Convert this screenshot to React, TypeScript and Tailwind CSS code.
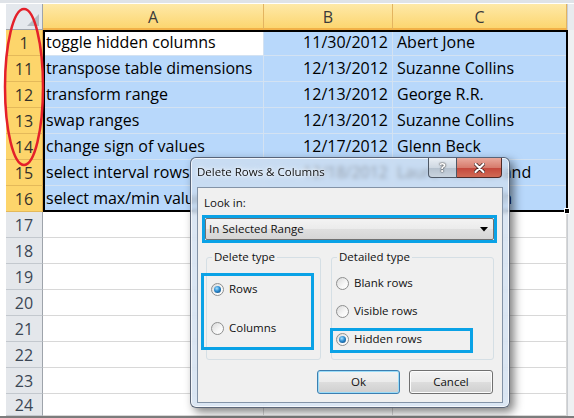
import React from 'react';

type Row = { n: number; a?: string; b?: string; c?: string };

const rows: Row[] = [
  { n: 1, a: 'toggle hidden columns', b: '11/30/2012', c: 'Abert Jone' },
  { n: 11, a: 'transpose table dimensions', b: '12/13/2012', c: 'Suzanne Collins' },
  { n: 12, a: 'transform range', b: '12/13/2012', c: 'George R.R.' },
  { n: 13, a: 'swap ranges', b: '12/13/2012', c: 'Suzanne Collins' },
  { n: 14, a: 'change sign of values', b: '12/17/2012', c: 'Glenn Beck' },
  { n: 15, a: 'select interval rows', b: '12/18/2012', c: 'Laura Hillenbrand' },
  { n: 16, a: 'select max/min values', b: '12/20/2012', c: 'Elizabeth Smith' },
  { n: 17 },
  { n: 18 },
  { n: 19 },
  { n: 20 },
  { n: 21 },
  { n: 22 },
  { n: 23 },
  { n: 24 },
];

const Radio = ({ checked }: { checked?: boolean }) => (
  <span className="flex h-[13px] w-[13px] shrink-0 items-center justify-center rounded-full border border-[#8e8f8f] bg-[linear-gradient(135deg,#d9d9d9,#f7f7f7_60%,#ffffff)]">
    {checked && (
      <span className="h-[7px] w-[7px] rounded-full bg-[radial-gradient(circle_at_40%_35%,#a8e2ff_0%,#2b8bd0_45%,#0c3d6c_100%)]" />
    )}
  </span>
);

const RadioItem = ({ label, checked }: { label: string; checked?: boolean }) => (
  <div className="flex h-[16px] items-center gap-[5px]">
    <Radio checked={checked} />
    <span>{label}</span>
  </div>
);

const GroupBox = ({
  title,
  className,
  children,
}: {
  title: string;
  className: string;
  children: React.ReactNode;
}) => (
  <div className={`relative rounded-[3px] border border-[#d5dfe5] ${className}`}>
    <span className="absolute left-[5px] top-[-9px] bg-[#f0f0f0] px-[2px] leading-[16px]">{title}</span>
    {children}
  </div>
);

const Dialog = () => (
  <div className="absolute left-[190px] top-[157px] flex h-[251px] w-[320px] flex-col rounded-[6px] border border-[rgba(40,50,70,0.7)] bg-[rgba(205,220,238,0.72)] shadow-[4px_4px_10px_rgba(0,0,0,0.5),inset_0_0_0_1px_rgba(255,255,255,0.7)] backdrop-blur-[2px] font-['Open_Sans','Noto_Sans',sans-serif] text-[11.5px] text-[#111]">
    {/* title bar */}
    <div className="flex h-[29px] items-start justify-between pl-[6px] pr-[7px]">
      <span className="mt-[6px] leading-[16px] [text-shadow:0_0_6px_#fff,0_0_3px_#fff]">Delete Rows &amp; Columns</span>
      <div className="flex">
        <div className="flex h-[20px] w-[29px] items-center justify-center rounded-bl-[4px] border border-t-0 border-[#4e5866] bg-[linear-gradient(#e9eef4,#cfd8e2_50%,#b4c0cd_51%,#c9d3de)] text-[13px] font-bold text-white [text-shadow:0_0_2px_#333,0_0_1px_#333]">
          ?
        </div>
        <div className="flex h-[20px] w-[45px] items-center justify-center rounded-br-[4px] border border-l-0 border-t-0 border-[#4e2a28] bg-[linear-gradient(#e9a99c,#d77c6d_50%,#c4463a_51%,#d06a55)]">
          <svg width="11" height="10" viewBox="0 0 11 10">
            <path d="M1.5 1 L9.5 9 M9.5 1 L1.5 9" stroke="#3a1a18" strokeWidth="3.6" strokeLinecap="round" />
            <path d="M1.5 1 L9.5 9 M9.5 1 L1.5 9" stroke="#ffffff" strokeWidth="2.2" strokeLinecap="round" />
          </svg>
        </div>
      </div>
    </div>

    {/* client area */}
    <div className="relative mx-[6px] mb-[4px] flex flex-1 flex-col border border-[#8393a7] bg-[#f0f0f0] pt-[7px]">
      <span className="ml-[6px] leading-[16px]">Look in:</span>
      <div className="ml-[4px] mt-[4px] h-[28px] w-[295px] border-[3px] border-[#0aa2e6]">
        <div className="flex h-full items-center justify-between rounded-[2px] border border-[#707070] bg-[linear-gradient(#f3f3f3,#ebebeb_50%,#dfdfdf_51%,#d5d5d5)] pl-[3px] pr-[5px]">
          <span>In Selected Range</span>
          <svg width="8" height="5" viewBox="0 0 8 5">
            <path d="M0 0 H8 L4 4.5 Z" fill="#000" />
          </svg>
        </div>
      </div>

      <div className="ml-[8px] mt-[14px] flex gap-[10px]">
        <GroupBox title="Delete type" className="h-[103px] w-[115px]">
          <div className="flex flex-col gap-[23px] pl-[4px] pt-[23px]">
            <RadioItem label="Rows" checked />
            <RadioItem label="Columns" />
          </div>
        </GroupBox>
        <GroupBox title="Detailed type" className="h-[103px] w-[163px]">
          <div className="flex flex-col gap-[12px] pl-[4px] pt-[17px]">
            <RadioItem label="Blank rows" />
            <RadioItem label="Visible rows" />
            <RadioItem label="Hidden rows" checked />
          </div>
        </GroupBox>
      </div>

      <div className="mt-[10px] flex justify-end gap-[9px] pr-[9px]">
        <button className="flex h-[24px] w-[83px] items-center justify-center rounded-[3px] border border-[#3c7fb1] bg-[linear-gradient(#f2f2f2,#ebebeb_50%,#dddddd_51%,#cfcfcf)] shadow-[inset_0_0_0_1px_#9bdcf8]">
          Ok
        </button>
        <button className="flex h-[24px] w-[84px] items-center justify-center rounded-[3px] border border-[#707070] bg-[linear-gradient(#f2f2f2,#ebebeb_50%,#dddddd_51%,#cfcfcf)] shadow-[inset_0_0_0_1px_#fcfcfc]">
          Cancel
        </button>
      </div>

      {/* annotation highlights */}
      <div className="absolute left-[3px] top-[85px] h-[77px] w-[113px] border-[3px] border-[#0aa2e6]" />
      <div className="absolute left-[132px] top-[140px] h-[25px] w-[143px] border-[3px] border-[#0aa2e6]" />
    </div>
  </div>
);

export default function App() {
  return (
    <div className="relative h-[418px] w-[574px] overflow-hidden bg-white font-['Open_Sans','Liberation_Sans',sans-serif] text-[16px] text-black">
      <div className="h-[4px] border-b border-white bg-[#dfe3e8]" />

      {/* column headers */}
      <div className="flex h-[26px]">
        <div className="w-[6px] bg-white" />
        <div className="relative w-[37px] border-b border-r border-[#9ea4ab] bg-[#e4e8ed]">
          <div className="absolute bottom-[3px] right-[3px] h-0 w-0 border-b-[12px] border-l-[12px] border-b-[#b6bcc3] border-l-transparent" />
        </div>
        {[
          ['A', 'w-[221px]'],
          ['B', 'w-[129px]'],
          ['C', 'w-[174px]'],
        ].map(([l, w]) => (
          <div
            key={l}
            className={`${w} flex items-center justify-center border-b-2 border-r border-b-[#f2b148] border-r-[#e3b460] bg-[linear-gradient(#fee9a8,#fcd670)] pt-[2px] text-[#3a3a3a]`}
          >
            {l}
          </div>
        ))}
        <div className="w-[7px] border-l border-[#c9cdd2] bg-[#e8ebee]" />
      </div>

      {/* rows */}
      {rows.map((r, i) => {
        const sel = r.n <= 16;
        const last = i === rows.length - 1;
        const cell = sel
          ? 'border-b border-r border-[#d3e2f2] bg-[#b8d8fb]'
          : 'border-b border-r border-[#d8d8d8] bg-white';
        return (
          <div key={r.n} className={`flex ${last ? 'h-[22px]' : 'h-[26px]'}`}>
            <div className="w-[6px] bg-white" />
            <div
              className={`flex w-[37px] items-center justify-center border-b border-r pt-[1px] ${
                sel
                  ? 'border-b-[#e4b95a] border-r-[#e0a846] bg-[#fdd56b] text-[#35312a]'
                  : 'border-b-[#c3c8ce] border-r-[#9ea4ab] bg-[#e4e7eb] text-[#3b4654]'
              }`}
            >
              {r.n}
            </div>
            <div
              className={`flex w-[221px] items-end overflow-visible whitespace-nowrap pb-[1px] pl-[3px] ${
                r.n === 1 ? 'border-b border-r border-[#d3e2f2] bg-white' : cell
              }`}
            >
              {r.a}
            </div>
            <div className={`flex w-[129px] items-end justify-end whitespace-nowrap pb-[1px] pr-[4px] ${cell}`}>{r.b}</div>
            <div className={`flex w-[174px] items-end whitespace-nowrap pb-[1px] pl-[4px] ${cell}`}>{r.c}</div>
            <div className="w-[7px] border-l border-[#c9cdd2] bg-[#eef0f2]" />
          </div>
        );
      })}
      <div className="h-[2px] bg-[#7c7c7c]" />

      {/* selection border + fill handle */}
      <div className="absolute left-[43px] top-[30px] h-[182px] w-[525px] border-2 border-black" />
      <div className="absolute left-[564px] top-[208px] h-[6px] w-[6px] border border-white bg-black" />

      {/* red annotation oval */}
      <svg className="absolute left-0 top-0" width="60" height="180" viewBox="0 0 60 180">
        <ellipse cx="24" cy="87" rx="19" ry="78" fill="none" stroke="#e4202a" strokeWidth="2.5" />
      </svg>

      <Dialog />
    </div>
  );
}
